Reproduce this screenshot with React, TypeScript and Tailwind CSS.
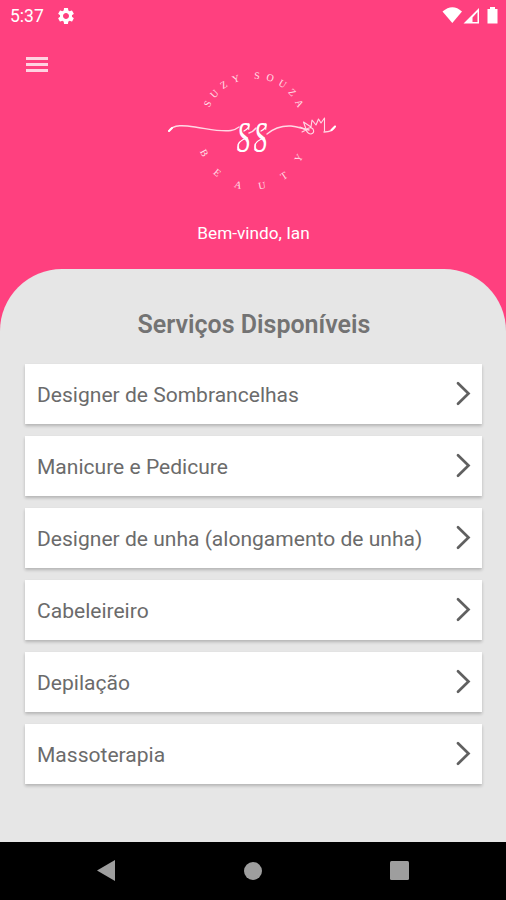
import { MdSettings } from "react-icons/md";

const services = [
  "Designer de Sombrancelhas",
  "Manicure e Pedicure",
  "Designer de unha (alongamento de unha)",
  "Cabeleireiro",
  "Depilação",
  "Massoterapia",
];

// letters around the ring: character, x, y, rotation
const ring: [string, number, number, number][] = [
  ["S", 208, 104, -62],
  ["U", 214.5, 94, -46],
  ["Z", 224, 85, -33],
  ["Y", 236, 79, -18],
  ["S", 257, 76, 4],
  ["O", 270, 78, 18],
  ["U", 282.5, 84, 32],
  ["Z", 292, 92.5, 46],
  ["A", 299, 103.5, 62],
  ["B", 204, 153, 62],
  ["E", 217, 173, 40],
  ["A", 238, 185, 16],
  ["U", 262, 186, -10],
  ["T", 284, 176, -34],
  ["Y", 299, 158, -60],
];

function StatusBar() {
  return (
    <div className="flex h-8 items-center justify-between pl-[10px] pr-2 text-white">
      <div className="flex items-center">
        <span className="w-[46px] pt-px text-[17.5px] leading-none">5:37</span>
        <MdSettings size={20} />
      </div>
      <svg width="56" height="18" viewBox="442 7 56 18" fill="currentColor">
        <path d="M442.5 11.5Q452.5 3 462 11.5L452.3 23Z" />
        <path fillRule="evenodd" d="M479 8V23.5H463.5ZM477.5 12L472.5 17.5V22H477.5Z" />
        <path d="M490 7h5v2h2.5v14.5h-10V9h2.5z" />
      </svg>
    </div>
  );
}

function Logo() {
  return (
    <svg className="mx-auto block" width="180" height="132" viewBox="163 64 180 132" fill="none">
      <g fill="#ffe0ea" fontFamily="'Liberation Serif', serif" fontSize="10" textAnchor="middle">
        {ring.map(([letter, x, y, angle], i) => (
          <text key={i} transform={`translate(${x} ${y}) rotate(${angle})`} y="3">
            {letter}
          </text>
        ))}
      </g>
      <g stroke="#ffd9e5" strokeWidth="1.4" strokeLinecap="round" strokeLinejoin="round">
        <path d="M169 131C173 124 185 125.5 195 127C209 129 220 132 231 130.5Q235 130 239 127" />
        <path d="M249 133Q253 132 256 128M267 134C274 128 281 125.5 291 126C298 126.5 303 129 309 130" />
        <path d="M324 132Q333 132 335 126.5" />
        <path d="M169 131L172 128M331.5 130L335 126.5" stroke="#fff" strokeWidth="2" />
        <path
          d="M300 127L306 130L302 132M303.5 122L311 127L312 120L316 125L318.5 119L321 123L324.5 118V131M303.5 122L306 129M306 130Q310 126 313 129Q315 133 311 134Q308 134 306 130"
          strokeWidth="1.1"
        />
      </g>
      <g fill="white" fontFamily="'Liberation Serif', serif" fontSize="44" fontStyle="italic">
        <text transform="translate(237 151.5) scale(.6 1)">S</text>
        <text transform="translate(254 151.5) scale(.6 1)">S</text>
      </g>
      {/* swashes of the monogram */}
      <g stroke="#fff" strokeWidth="1.3" strokeLinecap="round">
        <path d="M248.5 124Q250 128 244 131M247.500 138Q237 141 238 147.500Q239 152 243 151" />
        <path d="M265.5 124Q267 128 261 131M264.500 138Q254 141 255 147.500Q256 152 260 151" />
      </g>
    </svg>
  );
}

function ServiceCard({ name }: { name: string }) {
  return (
    <button className="flex h-[59.5px] w-full items-center justify-between bg-white pl-[12.5px] pr-[11px] text-left shadow-[0_2px_3px_rgba(0,0,0,0.22)]">
      <span className="pt-[2px] text-[21.05px] text-[#6b6b6b]">{name}</span>
      <svg width="16" height="26" viewBox="0 0 16 26" fill="none" stroke="#606060" strokeWidth="2.7" strokeLinecap="round">
        <path d="M3 2.3L13.5 12.5L3 22.8" />
      </svg>
    </button>
  );
}

export default function App() {
  return (
    <div className="flex h-[900px] w-[506px] flex-col overflow-hidden bg-[#ff407f] font-['Roboto',sans-serif]">
      <header className="h-[269px] shrink-0">
        <StatusBar />
        <div className="h-8 pl-[26px] pt-[25px]">
          <button className="flex flex-col gap-[3px]">
            <span className="h-[3px] w-[22px] bg-[#ffd3e1]" />
            <span className="h-[3px] w-[22px] bg-[#ffd3e1]" />
            <span className="h-[3px] w-[22px] bg-[#ffd3e1]" />
          </button>
        </div>
        <Logo />
        <p className="mt-[25px] pl-px text-center text-[17.2px] leading-6 text-white">Bem-vindo, Ian</p>
      </header>
      <main className="h-[572.5px] shrink-0 rounded-t-[62px] bg-[#e6e6e6] px-[24.5px] pt-10">
        <h1 className="pl-[2px] text-center text-[25px] font-semibold leading-8 text-[#737373]">Serviços Disponíveis</h1>
        <div className="mt-[23px] flex flex-col gap-[12.5px]">
          {services.map((name) => (
            <ServiceCard key={name} name={name} />
          ))}
        </div>
      </main>
      <nav className="flex flex-1 items-center justify-between bg-black px-[97px]">
        <svg width="18" height="21" viewBox="0 0 18 21" fill="#9e9e9e">
          <path d="M0 10.5L18 0V21Z" />
        </svg>
        <span className="size-[18px] rounded-full bg-[#9e9e9e]" />
        <span className="size-[19px] rounded-[1.5px] bg-[#9e9e9e]" />
      </nav>
    </div>
  );
}
